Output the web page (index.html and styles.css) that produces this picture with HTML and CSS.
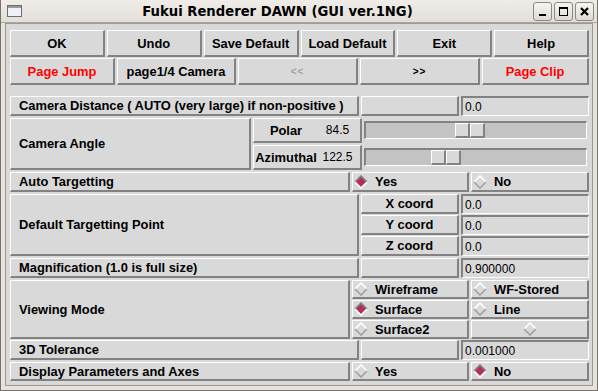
FILE: index.html
```html
<!DOCTYPE html>
<html>
<head>
    <title>Fukui Renderer DAWN (GUI ver.1NG)</title>
    <link rel="stylesheet" href="styles.css">
</head>
<body>
    <div class="window">
        <div class="titlebar">
            <svg class="win-icon" width="15" height="12" viewBox="0 0 15 12">
                <rect x="0.5" y="0.5" width="14" height="11" fill="#f4f6fa" stroke="#6f6c67"/>
                <rect x="1" y="1" width="13" height="2" fill="#9a9a9a"/>
                <rect x="1" y="3" width="13" height="8" fill="#eef1f6"/>
            </svg>
            <div class="title">Fukui Renderer DAWN (GUI ver.1NG)</div>
            <div class="controls">
                <span class="ctl">
                    <svg width="17" height="17" viewBox="0 0 17 17"><rect x="5" y="11" width="7" height="2" fill="#000"/></svg>
                </span>
                <span class="ctl">
                    <svg width="17" height="17" viewBox="0 0 17 17"><rect x="4.5" y="4.5" width="8" height="8" fill="none" stroke="#000"/><rect x="4" y="4" width="9" height="2" fill="#000"/></svg>
                </span>
                <span class="ctl">
                    <svg width="17" height="17" viewBox="0 0 17 17"><path d="M5 5 L12 12 M12 5 L5 12" stroke="#000" stroke-width="2.2"/></svg>
                </span>
            </div>
        </div>
        <div class="frame">
            <div class="content">
                <div class="toolbar">
                    <button class="btn">OK</button>
                    <button class="btn">Undo</button>
                    <button class="btn">Save Default</button>
                    <button class="btn">Load Default</button>
                    <button class="btn">Exit</button>
                    <button class="btn">Help</button>
                </div>
                <div class="toolbar pager">
                    <button class="btn red">Page Jump</button>
                    <button class="btn">page1/4 Camera</button>
                    <button class="btn arrows off">&lt;&lt;</button>
                    <button class="btn arrows">&gt;&gt;</button>
                    <button class="btn red">Page Clip</button>
                </div>

                <div class="params">
                    <div class="prow entry-row">
                        <div class="cell lab">Camera Distance ( AUTO (very large) if non-positive )</div>
                        <div class="cell"></div>
                        <div class="entry">0.0</div>
                    </div>

                    <div class="prow angle-row">
                        <div class="cell lab">Camera Angle</div>
                        <div class="sub two">
                            <div class="scale-row">
                                <div class="cell scale-name">
                                    <span class="sname">Polar</span>
                                    <span class="sval">84.5</span>
                                </div>
                                <div class="scale">
                                    <div class="trough">
                                        <div class="thumb" style="left: calc((100% - 30px) * 0.469)"><span></span><span></span></div>
                                    </div>
                                </div>
                            </div>
                            <div class="scale-row">
                                <div class="cell scale-name">
                                    <span class="sname">Azimuthal</span>
                                    <span class="sval">122.5</span>
                                </div>
                                <div class="scale">
                                    <div class="trough">
                                        <div class="thumb" style="left: calc((100% - 30px) * 0.34)"><span></span><span></span></div>
                                    </div>
                                </div>
                            </div>
                        </div>
                    </div>

                    <div class="prow radio-row">
                        <div class="cell lab">Auto Targetting</div>
                        <div class="cell radio">
                            <svg class="dia" width="14" height="14" viewBox="0 0 14 14"><polygon points="7,1 13,7 7,13 1,7" fill="#b03060"/><polyline points="1,7 7,1 13,7" fill="none" stroke="#828282" stroke-width="1.6"/><polyline points="1,7 7,13 13,7" fill="none" stroke="#fff" stroke-width="1.6"/></svg>
                            Yes
                        </div>
                        <div class="cell radio">
                            <svg class="dia" width="14" height="14" viewBox="0 0 14 14"><polygon points="7,1 13,7 7,13 1,7" fill="#d9d9d9"/><polyline points="1,7 7,1 13,7" fill="none" stroke="#fff" stroke-width="1.6"/><polyline points="1,7 7,13 13,7" fill="none" stroke="#a0a0a0" stroke-width="1.6"/></svg>
                            No
                        </div>
                    </div>

                    <div class="prow point-row">
                        <div class="cell lab">Default Targetting Point</div>
                        <div class="sub three">
                            <div class="coord-row">
                                <div class="cell name">X coord</div>
                                <div class="entry">0.0</div>
                            </div>
                            <div class="coord-row">
                                <div class="cell name">Y coord</div>
                                <div class="entry">0.0</div>
                            </div>
                            <div class="coord-row">
                                <div class="cell name">Z coord</div>
                                <div class="entry">0.0</div>
                            </div>
                        </div>
                    </div>

                    <div class="prow entry-row">
                        <div class="cell lab">Magnification (1.0 is full size)</div>
                        <div class="cell"></div>
                        <div class="entry">0.900000</div>
                    </div>

                    <div class="prow mode-row">
                        <div class="cell lab">Viewing Mode</div>
                        <div class="sub modes">
                            <div class="cell radio">
                                <svg class="dia" width="14" height="14" viewBox="0 0 14 14"><polygon points="7,1 13,7 7,13 1,7" fill="#d9d9d9"/><polyline points="1,7 7,1 13,7" fill="none" stroke="#fff" stroke-width="1.6"/><polyline points="1,7 7,13 13,7" fill="none" stroke="#a0a0a0" stroke-width="1.6"/></svg>
                                Wireframe
                            </div>
                            <div class="cell radio">
                                <svg class="dia" width="14" height="14" viewBox="0 0 14 14"><polygon points="7,1 13,7 7,13 1,7" fill="#d9d9d9"/><polyline points="1,7 7,1 13,7" fill="none" stroke="#fff" stroke-width="1.6"/><polyline points="1,7 7,13 13,7" fill="none" stroke="#a0a0a0" stroke-width="1.6"/></svg>
                                WF-Stored
                            </div>
                            <div class="cell radio">
                                <svg class="dia" width="14" height="14" viewBox="0 0 14 14"><polygon points="7,1 13,7 7,13 1,7" fill="#b03060"/><polyline points="1,7 7,1 13,7" fill="none" stroke="#828282" stroke-width="1.6"/><polyline points="1,7 7,13 13,7" fill="none" stroke="#fff" stroke-width="1.6"/></svg>
                                Surface
                            </div>
                            <div class="cell radio">
                                <svg class="dia" width="14" height="14" viewBox="0 0 14 14"><polygon points="7,1 13,7 7,13 1,7" fill="#d9d9d9"/><polyline points="1,7 7,1 13,7" fill="none" stroke="#fff" stroke-width="1.6"/><polyline points="1,7 7,13 13,7" fill="none" stroke="#a0a0a0" stroke-width="1.6"/></svg>
                                Line
                            </div>
                            <div class="cell radio">
                                <svg class="dia" width="14" height="14" viewBox="0 0 14 14"><polygon points="7,1 13,7 7,13 1,7" fill="#d9d9d9"/><polyline points="1,7 7,1 13,7" fill="none" stroke="#fff" stroke-width="1.6"/><polyline points="1,7 7,13 13,7" fill="none" stroke="#a0a0a0" stroke-width="1.6"/></svg>
                                Surface2
                            </div>
                            <div class="cell radio centered">
                                <svg class="dia" width="14" height="14" viewBox="0 0 14 14"><polygon points="7,1 13,7 7,13 1,7" fill="#d9d9d9"/><polyline points="1,7 7,1 13,7" fill="none" stroke="#fff" stroke-width="1.6"/><polyline points="1,7 7,13 13,7" fill="none" stroke="#a0a0a0" stroke-width="1.6"/></svg>
                            </div>
                        </div>
                    </div>

                    <div class="prow entry-row tol">
                        <div class="cell lab">3D Tolerance</div>
                        <div class="cell"></div>
                        <div class="entry">0.001000</div>
                    </div>

                    <div class="prow radio-row last">
                        <div class="cell lab">Display Parameters and Axes</div>
                        <div class="cell radio">
                            <svg class="dia" width="14" height="14" viewBox="0 0 14 14"><polygon points="7,1 13,7 7,13 1,7" fill="#d9d9d9"/><polyline points="1,7 7,1 13,7" fill="none" stroke="#fff" stroke-width="1.6"/><polyline points="1,7 7,13 13,7" fill="none" stroke="#a0a0a0" stroke-width="1.6"/></svg>
                            Yes
                        </div>
                        <div class="cell radio">
                            <svg class="dia" width="14" height="14" viewBox="0 0 14 14"><polygon points="7,1 13,7 7,13 1,7" fill="#b03060"/><polyline points="1,7 7,1 13,7" fill="none" stroke="#828282" stroke-width="1.6"/><polyline points="1,7 7,13 13,7" fill="none" stroke="#fff" stroke-width="1.6"/></svg>
                            No
                        </div>
                    </div>
                </div>
            </div>
        </div>
    </div>
</body>
</html>
```

FILE: styles.css
```css
* {
    box-sizing: border-box;
}

body {
    margin: 0;
    width: 598px;
    height: 391px;
    overflow: hidden;
    font-family: "Liberation Sans", Arial, sans-serif;
}

.window {
    height: 391px;
    display: flex;
    flex-direction: column;
    background: #e6e2dc;
    border: 1px solid #77736c;
    border-top: none;
}

.titlebar {
    height: 23px;
    display: flex;
    align-items: center;
    padding: 0 3px 0 6px;
    background: linear-gradient(#f0ede9, #e2ded8);
    border-bottom: 1px solid #aaa69f;
}

.title {
    flex: 1;
    text-align: center;
    font-family: "DejaVu Sans", sans-serif;
    font-weight: bold;
    font-size: 13.2px;
    color: #000;
    padding-top: 1px;
}

.controls {
    display: flex;
    gap: 2px;
}

.ctl {
    width: 19px;
    height: 19px;
    display: flex;
    align-items: center;
    justify-content: center;
    border: 1px solid #8d8981;
    border-radius: 3px;
    background: linear-gradient(#f7f5f2, #dedad3);
}

.frame {
    flex: 1;
    padding: 0 4px 4px 4px;
    display: flex;
}

.content {
    flex: 1;
    background: #d9d9d9;
    border: 1px solid #9d9991;
    padding: 6px 3px 0 4px;
}

/* buttons */

.toolbar {
    display: grid;
    grid-template-columns: repeat(6, 1fr);
    gap: 2px;
    height: 27px;
}

.toolbar.pager {
    grid-template-columns: 105fr 119fr 120fr 120fr 107fr;
    margin-top: 1px;
}

.btn {
    margin: 0;
    padding: 0;
    background: #d9d9d9;
    border-style: solid;
    border-width: 1px 2px 2px 1px;
    border-color: #ffffff #828282 #828282 #ffffff;
    font-family: "Liberation Sans", Arial, sans-serif;
    font-weight: bold;
    font-size: 12.9px;
    color: #000;
}

.btn.red {
    color: #ff0000;
}

.btn.arrows {
    font-size: 10px;
    letter-spacing: 1px;
}

.btn.off {
    color: #a3a3a3;
}

/* parameter table */

.params {
    margin-top: 11px;
    display: flex;
    flex-direction: column;
    gap: 2px;
}

.prow {
    display: grid;
    gap: 2px;
    height: 20px;
}

.entry-row {
    grid-template-columns: 349px 98px 1fr;
}

.radio-row {
    grid-template-columns: 340px 117px 1fr;
}

.angle-row {
    grid-template-columns: 241px 1fr;
    height: 52px;
}

.point-row {
    grid-template-columns: 349px 1fr;
    height: 62px;
}

.mode-row {
    grid-template-columns: 340px 1fr;
    height: 59px;
}

.tol {
    margin-top: -1px;
}

.last {
    height: 19px;
}

.cell {
    background: #d9d9d9;
    border-style: solid;
    border-width: 1px 2px 2px 1px;
    border-color: #ffffff #828282 #828282 #ffffff;
    font-weight: bold;
    font-size: 12.9px;
    color: #000;
    display: flex;
    align-items: center;
}

.lab {
    padding-left: 8px;
}

.entry {
    background: #d9d9d9;
    border-style: solid;
    border-width: 2px 1px 1px 2px;
    border-color: #828282 #ffffff #ffffff #828282;
    font-size: 12px;
    padding-left: 2px;
    display: flex;
    align-items: center;
    color: #000;
}

.sub {
    display: grid;
}

.sub.two {
    grid-template-rows: 1fr 1fr;
    gap: 2px;
}

.sub.three {
    grid-template-rows: 1fr 1fr 1fr;
    gap: 1px;
}

.sub.modes {
    grid-template-columns: 117px 1fr;
    grid-template-rows: 1fr 1fr 1fr;
    column-gap: 2px;
    row-gap: 1px;
}

.coord-row {
    display: grid;
    grid-template-columns: 98px 1fr;
    gap: 2px;
}

.name {
    justify-content: center;
}

.scale-row {
    display: grid;
    grid-template-columns: 109px 1fr;
    gap: 1px;
}

.scale-name .sname {
    width: 64px;
    text-align: center;
}

.scale-name .sval {
    flex: 1;
    text-align: center;
    font-weight: normal;
    font-size: 12px;
    padding-right: 3px;
}

.scale {
    padding: 3px 2px 4px 1px;
    display: flex;
}

.trough {
    position: relative;
    flex: 1;
    background: #c3c3c3;
    border-style: solid;
    border-width: 2px 1px 1px 2px;
    border-color: #828282 #ffffff #ffffff #828282;
}

.thumb {
    position: absolute;
    top: 0;
    bottom: 0;
    width: 30px;
    display: flex;
}

.thumb span {
    flex: 1;
    background: #d9d9d9;
    border-style: solid;
    border-width: 1px 2px 2px 1px;
    border-color: #ffffff #828282 #828282 #ffffff;
}

.radio {
    gap: 7px;
    padding-left: 1px;
}

.radio.centered {
    justify-content: center;
    padding-left: 0;
}

.dia {
    flex: none;
}
```
